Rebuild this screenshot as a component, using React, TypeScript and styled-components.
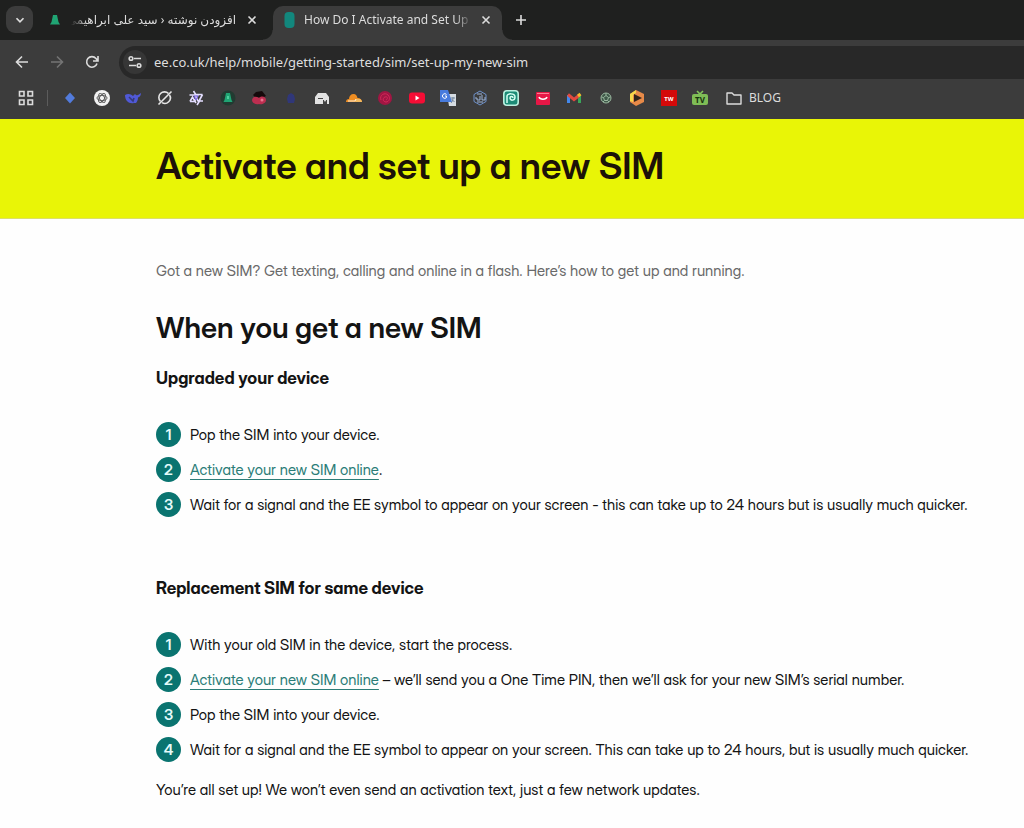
import React from 'react';
import styled, { createGlobalStyle } from 'styled-components';

const GlobalStyle = createGlobalStyle`
  * { box-sizing: border-box; }
  body {
    margin: 0;
    background: #fefefe;
    color: #141414;
    font-family: "Inter Display", Inter, "Liberation Sans", sans-serif;
    font-feature-settings: "cv11";
  }
  h1, h2, h3, p, ol { margin: 0; padding: 0; }
  button { font: inherit; color: inherit; background: none; border: 0; padding: 0; cursor: pointer; }
  svg { display: block; }
`;

const Browser = styled.header`
  background: #3c3c3c;
  color: #dcdcdc;
  font-family: "Noto Sans", "DejaVu Sans", sans-serif;
  font-feature-settings: normal;
`;

const TabStrip = styled.div`
  display: flex;
  height: 40px;
  padding: 6px 6px 0;
  background: #1f201f;
`;

const TabSearch = styled.button`
  display: grid;
  place-items: center;
  flex: none;
  width: 27px;
  height: 27px;
  border-radius: 9px;
  background: #3c3c3c;
`;

const Tab = styled.div<{ $active?: boolean }>`
  position: relative;
  display: flex;
  align-items: center;
  gap: 6px;
  width: ${p => (p.$active ? 229 : 240)}px;
  height: 34px;
  padding: 0 8px 6px ${p => (p.$active ? 9 : 14)}px;
  border-radius: 10px 10px 0 0;
  background: ${p => (p.$active ? '#3c3c3c' : 'transparent')};

  &::before, &::after {
    content: '';
    display: ${p => (p.$active ? 'block' : 'none')};
    position: absolute;
    bottom: 0;
    width: 10px;
    height: 10px;
  }
  &::before { left: -10px; background: radial-gradient(circle at 0 0, transparent 9px, #3c3c3c 10px); }
  &::after { right: -10px; background: radial-gradient(circle at 100% 0, transparent 9px, #3c3c3c 10px); }
`;

const InactiveTab = styled(Tab)`
  gap: 8px;
  padding-right: 13px;
`;

const TabTitle = styled.button<{ $rtl?: boolean }>`
  flex: 1;
  min-width: 0;
  overflow: hidden;
  white-space: nowrap;
  font-size: 12px;
  line-height: 20px;
  direction: ${p => (p.$rtl ? 'rtl' : 'ltr')};
  text-align: start;
  mask-image: linear-gradient(to ${p => (p.$rtl ? 'left' : 'right')}, #000 90%, transparent);
`;

const IconButton = styled.button<{ $dim?: boolean }>`
  display: grid;
  place-items: center;
  flex: none;
  width: 16px;
  height: 16px;
  color: ${p => (p.$dim ? '#747474' : '#dcdcdc')};
`;

const NewTab = styled(IconButton)`
  margin: 6px 0 0 11px;
`;

const Toolbar = styled.div`
  display: flex;
  align-items: center;
  gap: 19px;
  height: 44px;
  padding-left: 14px;
`;

const AddressBar = styled.label`
  display: flex;
  align-items: center;
  gap: 7px;
  flex: 1;
  height: 33px;
  padding-left: 4px;
  border-radius: 17px 0 0 17px;
  background: #282828;
`;

const SiteInfo = styled.span`
  display: grid;
  place-items: center;
  width: 24px;
  height: 24px;
  border-radius: 12px;
  background: #363636;
`;

const Address = styled.input`
  flex: 1;
  min-width: 0;
  padding: 0;
  border: 0;
  outline: 0;
  background: transparent;
  color: #dedede;
  font-family: "Noto Sans", sans-serif;
  font-size: 13px;
`;

const Bookmarks = styled.nav`
  display: flex;
  align-items: center;
  height: 35px;
  padding: 0 18px 8px;
`;

const Divider = styled.span`
  width: 1px;
  height: 16px;
  margin: 0 14px 0 13px;
  background: #5c5c5c;
`;

const BookmarkIcons = styled.div`
  display: flex;
  justify-content: space-between;
  flex: 0 1 646px;
`;

const Bookmark = styled.a`
  display: block;
  width: 16px;
  height: 16px;
`;

const Folder = styled.button`
  display: flex;
  align-items: center;
  gap: 7px;
  margin-left: 18px;
  font-size: 12px;
  line-height: 16px;
`;

const Hero = styled.div`
  padding: 23px 32px 28px 156px;
  background: #e9f506;
  border-bottom: 1px solid #dcdf6a;
`;

const Title = styled.h1`
  color: #1c1208;
  font-size: 37px;
  font-weight: 600;
  line-height: 48px;
`;

const Content = styled.main`
  padding: 39px 32px 24px 156px;
  font-size: 15px;
  line-height: 25px;
`;

const Intro = styled.p`
  color: #6a6a6a;
`;

const Heading = styled.h2`
  margin-top: 27px;
  font-size: 29px;
  font-weight: 600;
  line-height: 36px;
`;

const Subheading = styled.h3`
  margin: 20px 0 32px;
  font-size: 17px;
  font-weight: 700;
  line-height: 24px;
`;

const Steps = styled.ol`
  display: flex;
  flex-direction: column;
  gap: 10px;
  margin-bottom: 15px;
  list-style: none;
  counter-reset: step;
`;

const Step = styled.li`
  display: flex;
  gap: 9px;
  counter-increment: step;

  &::before {
    content: counter(step);
    flex: none;
    width: 25px;
    height: 25px;
    border-radius: 50%;
    background: #0a7470;
    color: #e4fbfa;
    font-weight: 600;
    text-align: center;
  }
`;

const Section = styled.section`
  & + & { padding-top: 16px; }
  &:not(:last-of-type) { padding-bottom: 8px; }
`;

const TextLink = styled.a`
  color: #2c7d78;
  text-decoration: underline;
  text-decoration-thickness: 1px;
  text-underline-offset: 4px;
  text-decoration-skip-ink: none;
`;

const Svg = ({ size = 16, children }: { size?: number; children: React.ReactNode }) => (
  <svg width={size} height={size} viewBox="0 0 16 16" fill="none" stroke="currentColor" strokeWidth="1.6" aria-hidden="true">
    {children}
  </svg>
);

const CloseIcon = () => <Svg><path d="M4.500 4.500l7 7M11.500 4.500l-7 7" /></Svg>;

const BellIcon = () => (
  <Svg><path d="M6 3h4l1.500 7 1.500 2.500H3L4.500 10z" fill="#20a574" stroke="none" /></Svg>
);

const bookmarks: [string, React.ReactNode][] = [
  ['Diamond', <path d="M8 2.500l5 5.500-5 5.500L3 8z" fill="#527bdc" stroke="none" />],
  ['ChatGPT', <g><circle cx="8" cy="8" r="8" fill="#f2f2f2" stroke="none" /><g stroke="#555" strokeWidth=".9"><ellipse cx="8" cy="8" rx="5" ry="2.500" /><ellipse cx="8" cy="8" rx="5" ry="2.500" transform="rotate(60 8 8)" /><ellipse cx="8" cy="8" rx="5" ry="2.500" transform="rotate(120 8 8)" /></g></g>],
  ['DeepSeek', <g stroke="none"><path d="M0 5c3-2 6-1 8 1l2-2 1 1c2 1 3-1 5-2-.2 3-1.500 4-3 4.500 0 3-1 4-2 5.500H9c-5 1-9-2-9-8z" fill="#5059d6" /><path d="M4 7l4 4 1-3" stroke="#353b78" /></g>],
  ['Grok', <g stroke="#e6e6e6"><path d="M11.500 3.500A5.500 5.500 0 0 0 3.500 11.500M5 12.600A5.500 5.500 0 0 0 12.500 5" /><path d="M1.500 14.500L14.500 1.500" /></g>],
  ['Qwen', <g stroke="#e4deff" strokeWidth="1.600"><path d="M5.500 1L8 5H1.500M14.500 4.500H7.500M14.500 4.500L11 11M15 11H10L6.500 4.500M9 15l2.500-4M2 11.500h4.500L10 5M2 11.500L4.500 7 8 13" /><path d="M6 6h4l-2 4z" stroke="#6d55df" strokeWidth="1" /></g>],
  ['Rank', <g stroke="none"><circle cx="8" cy="8" r="7.500" fill="#213b31" /><path d="M6 3h4l1.500 7 1 2H3.500l1-2z" fill="#20a574" /><path d="M7 6h2v3H7z" fill="#4cd19d" /></g>],
  ['Cherry', <g stroke="none"><path d="M2 5l3-3 6-1 4 5-4 2-7-1z" fill="#15090b" /><path d="M1 10c1-4 4-4 7-2 3-3 7-1 7 2 0 3-4 5-7 4-3 1-7-1-7-4z" fill="#bd2e50" /><circle cx="11" cy="10" r="1.500" fill="#e77690" /></g>],
  ['Blue', <path d="M8 3l3 2 1 4-1 4H5L4 9l1-4z" fill="#303779" stroke="none" />],
  ['Archive', <g stroke="none"><path d="M4 3h8l3 4v7H1V7z" fill="#e2e2e2" /><path d="M4 8h5v1H4zM9 10h4v4H9z" fill="#444" /><path d="M10 10l1 2 1-2z" fill="#fff" /></g>],
  ['Cloudflare', <g stroke="none"><path d="M0 12c0-2 1-3 3-3 0-3 2-5 4.500-5S11 6 11.500 8c3 0 4.500 2 4.500 4z" fill="#ee8d22" /><path d="M10 9c3-1 6 0 6 3H9z" fill="#f4ba61" /><path d="M2 11h7l1-2" stroke="#fff0d8" strokeWidth="1" /></g>],
  ['Spiral', <g><circle cx="8" cy="8" r="7" fill="#a11643" stroke="none" /><path d="M4 10C2 5 8 2 11 5s1 7-2 7-4-4-1-5 3 2 1 3" stroke="#d3285a" strokeWidth="1" /></g>],
  ['YouTube', <g stroke="none"><rect x="0" y="2.500" width="16" height="11" rx="3" fill="#f50d35" /><path d="M6.500 5.500l4 2.500-4 2.500z" fill="#fff" /></g>],
  ['Translate', <g stroke="none"><path d="M7 4h9v12H9z" fill="#d6dce2" /><path d="M0 0h8l4 12H0z" fill="#477bdd" /><path d="M6.500 4.500a2.300 2.300 0 1 0 0 3V6H5" stroke="#fff" strokeWidth="1" /><path d="M10.500 8h4.500M13 7v1c0 2-1 4-2 5M11.500 9l3 3" stroke="#72869c" strokeWidth="1" /></g>],
  ['Hexagon', <g stroke="#6e92cc" strokeWidth="1"><path d="M8 1l6 3.500v7L8 15l-6-3.500v-7z" /><path d="M3 8h2v2h3V6M10 5v5h3V7M5 12h6M5 4h5" stroke="#9db4d8" /></g>],
  ['Pixel', <g><rect x=".8" y=".8" width="14.400" height="14.400" rx="3" fill="#1c8b76" stroke="#b9f0df" /><path d="M4 13V6c0-3 8-3 8 1 0 4-5 4-5 1 0-2 3-2 3 0" stroke="#d6fff3" strokeWidth="1.500" /></g>],
  ['Mail', <g stroke="none"><rect x="1" y="2" width="14" height="13" rx="1" fill="#e71746" /><path d="M2 3.500h12" stroke="#ff7c91" strokeWidth="1" /><path d="M4 7c1 3 7 3 8 0" stroke="#fff" strokeWidth="1.500" /></g>],
  ['Gmail', <g strokeWidth="3"><path d="M2.500 13V5" stroke="#4388ec" /><path d="M13.500 13V5" stroke="#39a65a" /><path d="M2 4.500l6 5 5-4" stroke="#e34a3f" /><path d="M12 6l2.500-2" stroke="#f4bb2b" /></g>],
  ['Football', <g stroke="#9ab89f" strokeWidth="1"><circle cx="8" cy="8" r="5" fill="#40594a" /><path d="M8 5.500l2.500 2-1 3h-3l-1-3zM8 3v2.500M3.500 7l2 .5M12.500 7l-2 .5M6.500 10.500L5 12M9.500 10.500L11 12" /></g>],
  ['Player', <g stroke="none"><path d="M7 0l8 4v8l-8 4-6-4V4z" fill="#e78a48" /><path d="M7 0v3L4 5v7l-3-1V4z" fill="#f5d84b" /><path d="M5 4l8 4-8 4z" fill="#30251d" /></g>],
  ['TW', <g stroke="none"><rect width="16" height="16" fill="#d40909" /><text x="8" y="10.500" textAnchor="middle" fontSize="6" fontWeight="700" fill="#fff">TW</text></g>],
  ['TV', <g><path d="M5 1l3 3 3-3" stroke="#83c65b" /><rect x="0" y="4" width="16" height="11" rx="2" fill="#7fbd56" stroke="none" /><text x="8" y="12.500" textAnchor="middle" fontSize="8" fontWeight="700" fill="#15320d" stroke="none">TV</text></g>],
];

export default function App() {
  return (
    <>
      <GlobalStyle />
      <Browser>
        <TabStrip>
          <TabSearch aria-label="Search tabs"><Svg size={14}><path d="M4 6l4 4 4-4" strokeWidth="2" /></Svg></TabSearch>
          <InactiveTab>
            <BellIcon />
            <TabTitle $rtl lang="fa">افزودن نوشته ‹ سید علی ابراهیمی</TabTitle>
            <IconButton aria-label="Close tab"><CloseIcon /></IconButton>
          </InactiveTab>
          <Tab $active>
            <Svg><rect x="2.500" y="0" width="10" height="16" rx="4" fill="#12877d" stroke="none" /></Svg>
            <TabTitle>How Do I Activate and Set Up M</TabTitle>
            <IconButton aria-label="Close tab"><CloseIcon /></IconButton>
          </Tab>
          <NewTab aria-label="New tab"><Svg><path d="M8 3v10M3 8h10" /></Svg></NewTab>
        </TabStrip>
        <Toolbar>
          <IconButton aria-label="Back"><Svg><path d="M14 8H3M8 2.500L2.500 8 8 13.500" /></Svg></IconButton>
          <IconButton aria-label="Forward" $dim><Svg><path d="M2 8h11M8 2.500L13.500 8 8 13.500" /></Svg></IconButton>
          <IconButton aria-label="Reload"><Svg><path d="M13 9.500A5.300 5.300 0 1 1 12 4.500l1.500 2M14 2v5H9" /></Svg></IconButton>
          <AddressBar>
            <SiteInfo><Svg><path d="M7 4.500h7M2 11.500h7" /><circle cx="4" cy="4.500" r="1.800" /><circle cx="12" cy="11.500" r="1.800" /></Svg></SiteInfo>
            <Address aria-label="Address" defaultValue="ee.co.uk/help/mobile/getting-started/sim/set-up-my-new-sim" />
          </AddressBar>
        </Toolbar>
        <Bookmarks aria-label="Bookmarks">
          <IconButton aria-label="Apps"><Svg><path d="M1.500 1.500h4.500v4.500H1.500zM10 1.500h4.500v4.500H10zM1.500 10h4.500v4.500H1.500zM10 10h4.500v4.500H10z" /></Svg></IconButton>
          <Divider />
          <BookmarkIcons>
            {bookmarks.map(([name, icon]) => (
              <Bookmark key={name} href="#" aria-label={name}><Svg>{icon}</Svg></Bookmark>
            ))}
          </BookmarkIcons>
          <Folder>
            <Svg><path d="M1 3h5l2 2h7v9H1z" strokeWidth="1.400" strokeLinejoin="round" /></Svg>
            BLOG
          </Folder>
        </Bookmarks>
      </Browser>
      <Hero><Title>Activate and set up a new SIM</Title></Hero>
      <Content>
        <Intro>Got a new SIM? Get texting, calling and online in a flash. Here’s how to get up and running.</Intro>
        <Heading>When you get a new SIM</Heading>
        <Section>
          <Subheading>Upgraded your device</Subheading>
          <Steps>
            <Step><span>Pop the SIM into your device.</span></Step>
            <Step><span><TextLink href="#">Activate your new SIM online</TextLink>.</span></Step>
            <Step><span>Wait for a signal and the EE symbol to appear on your screen - this can take up to 24 hours but is usually much quicker.</span></Step>
          </Steps>
        </Section>
        <Section>
          <Subheading>Replacement SIM for same device</Subheading>
          <Steps>
            <Step><span>With your old SIM in the device, start the process.</span></Step>
            <Step><span><TextLink href="#">Activate your new SIM online</TextLink> – we’ll send you a One Time PIN, then we’ll ask for your new SIM’s serial number.</span></Step>
            <Step><span>Pop the SIM into your device.</span></Step>
            <Step><span>Wait for a signal and the EE symbol to appear on your screen. This can take up to 24 hours, but is usually much quicker.</span></Step>
          </Steps>
        </Section>
        <p>You’re all set up! We won’t even send an activation text, just a few network updates.</p>
      </Content>
    </>
  );
}
